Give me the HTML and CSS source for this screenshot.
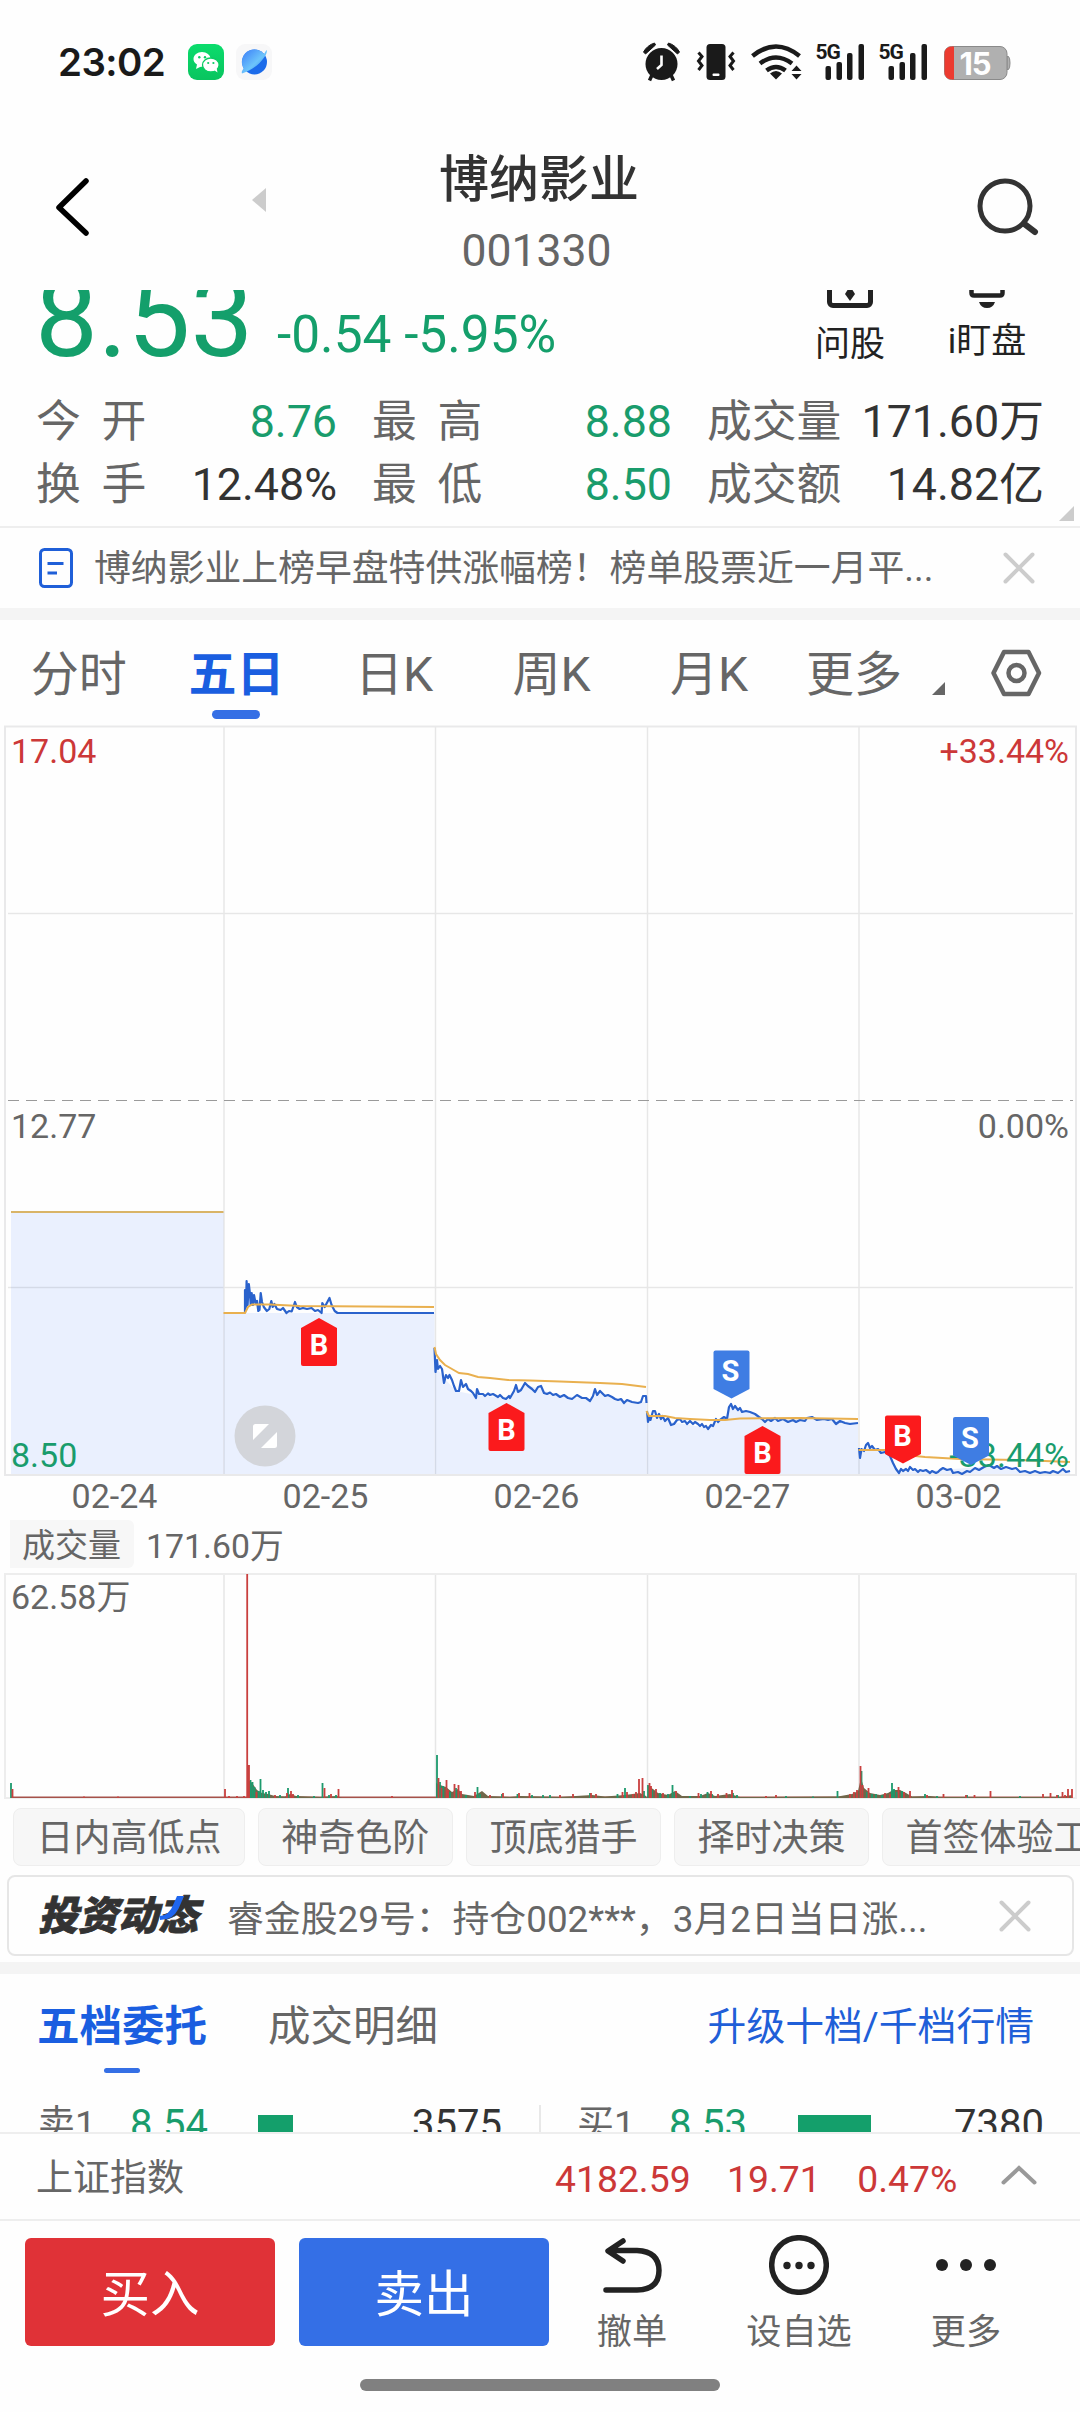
FILE: index.html
```html
<!DOCTYPE html>
<html lang="zh-CN">
<head>
<meta charset="utf-8">
<title>博纳影业 001330</title>
<link rel="stylesheet" href="styles.css">
</head>
<body>
<div class="status">
  <span class="clock">23:02</span>
  <svg class="app-icon" width="36" height="36" viewBox="0 0 36 36">
    <defs><linearGradient id="wx" x1="0" y1="0" x2="0" y2="1"><stop offset="0" stop-color="#0bdc6c"/><stop offset="1" stop-color="#09c45f"/></linearGradient></defs>
    <rect width="36" height="36" rx="9" fill="url(#wx)"/>
    <path d="M8 25l1-4.500C6.500 19 5.500 17 5.500 15c0-4 4-7 8.500-7s8.500 3 8.500 6.500L18 22l-6 1z" fill="#fff"/>
    <ellipse cx="22.800" cy="21" rx="8.300" ry="7" fill="#fff" stroke="#0acc63" stroke-width="1.300"/>
    <path d="M26 26l3.500 2.500-.8-4z" fill="#fff"/>
    <g fill="#0acc63"><circle cx="11.300" cy="13.300" r="1.200"/><circle cx="17" cy="13.300" r="1.200"/><circle cx="20.200" cy="19" r="1.100"/><circle cx="25.400" cy="19" r="1.100"/></g>
  </svg>
  <svg class="app-icon" width="36" height="36" viewBox="0 0 36 36">
    <defs><linearGradient id="pl" x1="0" y1="0" x2="1" y2="1"><stop offset="0" stop-color="#3a7cf8"/><stop offset=".55" stop-color="#6cc4fb"/><stop offset="1" stop-color="#2a7ff0"/></linearGradient></defs>
    <rect width="36" height="36" rx="9" fill="#f7f7f8"/>
    <circle cx="18.500" cy="18" r="12.500" fill="#1b6bea"/>
    <path d="M6 20A12.500 12.500 0 0 1 28 10l2.500-4C33 9 22 25 6 29.500c-1-2 1-4 1.500-5z" fill="url(#pl)"/>
  </svg>
  <svg class="sys" width="390" height="44" viewBox="630 40 390 44">
    <g fill="#1a1a1a">
      <circle cx="661.500" cy="64" r="16"/>
      <path d="M643.500 52a19 19 0 0 1 11-9l1 2-10 9zM679.500 52a19 19 0 0 0-11-9l-1 2 10 9z" stroke="#1a1a1a" stroke-width="1"/>
      <path d="M652 75l-2.500 5.500M671 75l2.500 5.500" stroke="#1a1a1a" stroke-width="3.500"/>
      <path d="M661.500 55.500V65l-4.500 4" fill="none" stroke="#fff" stroke-width="2.600"/>
      <rect x="706.500" y="44" width="19" height="36" rx="3.500"/><rect x="712.500" y="73.500" width="7" height="2.500" rx="1" fill="#fff"/>
      <g fill="none" stroke="#1a1a1a" stroke-width="3"><path d="M698.500 52.500l3.500 4-3.500 4.500 3.500 4.500-3.500 4.500M733.500 52.500l-3.500 4 3.500 4.500-3.500 4.500 3.500 4.500"/></g>
      <g fill="none" stroke="#1a1a1a" stroke-width="4.500"><path d="M752.500 56q23.500-19 47 0M760 63.500q16-12 32 0M766.500 70.500q9.500-7 19 0"/></g>
      <path d="M770 73.500q6-5 12 0l-6 6z"/>
      <path d="M791.500 71l5-5.500 5 5.500zM791.500 74l5 5.500 5-5.500z"/>
      <g id="sig"><text class="s5g" x="815.500" y="58.500">5G</text><rect x="825.500" y="66" width="5.500" height="14" rx="2"/><rect x="836.500" y="62" width="5.500" height="18" rx="2"/><rect x="847" y="53" width="5.500" height="27" rx="2"/><rect x="858.500" y="44" width="5.500" height="36" rx="2"/></g>
      <use href="#sig" x="63"/>
    </g>
    <path d="M1007 56.500h1.500q1.500 1.500 1.500 6.500t-1.500 6.500h-1.500z" fill="#b0b0b0" stroke="#8a8a8a"/>
    <rect x="944.500" y="46.500" width="62.500" height="33" rx="7" fill="#b0b0b0" stroke="#8a8a8a"/>
    <path d="M954 46.500h-2.500a7 7 0 0 0-7 7v19a7 7 0 0 0 7 7h2.500z" fill="#ec3b30"/>
    <text class="batt" x="975" y="74.500">15</text>
  </svg>
</div>

<header class="topbar">
  <svg class="back" width="40" height="60" viewBox="0 0 40 60"><path d="M32 4L5 30.500 32 56" fill="none" stroke="#000" stroke-width="5.500" stroke-linecap="round" stroke-linejoin="round"/></svg>
  <svg class="prev" width="14" height="24" viewBox="0 0 14 24"><path d="M14 0v24L0 12z" fill="#ccc"/></svg>
  <div class="heading"><h1>博纳影业</h1><p>001330</p></div>
  <svg class="search" width="66" height="60" viewBox="975 177 66 60"><circle cx="1005" cy="206" r="25" fill="none" stroke="#333" stroke-width="5"/><path d="M1024.500 224l10.500 8" stroke="#333" stroke-width="6" stroke-linecap="round"/></svg>
</header>

<section class="quote">
  <div class="price-row">
    <span class="price">8.53</span>
    <span class="change">-0.54 -5.95%</span>
    <div class="shortcut ask">
      <svg width="50" height="30" viewBox="825 278 50 30"><path d="M829.500 280v22a3.500 3.500 0 0 0 3.500 3.500h34a3.500 3.500 0 0 0 3.500-3.500v-22" fill="none" stroke="#222" stroke-width="5"/><path d="M850 286l5 8-5 7-5-7z" fill="#222"/></svg>
      <span>问股</span>
    </div>
    <div class="shortcut watch">
      <svg width="50" height="30" viewBox="962 278 50 30"><path d="M971.500 280v13q0 2.500 2.500 2.500h26q2.500 0 2.500-2.500v-13" fill="none" stroke="#222" stroke-width="4.500"/><path d="M979 302h16q-2 6-8 6t-8-6z" fill="#222"/></svg>
      <span>i盯盘</span>
    </div>
  </div>
  <dl class="stats">
    <div><dt>今 开</dt><dd class="down">8.76</dd></div>
    <div><dt>最 高</dt><dd class="down">8.88</dd></div>
    <div><dt>成交量</dt><dd>171.60万</dd></div>
    <div><dt>换 手</dt><dd>12.48%</dd></div>
    <div><dt>最 低</dt><dd class="down">8.50</dd></div>
    <div><dt>成交额</dt><dd>14.82亿</dd></div>
  </dl>
  <svg class="corner" width="15" height="15" viewBox="0 0 15 15"><path d="M15 0v15H0z" fill="#ccc"/></svg>
</section>

<section class="news">
  <svg width="34" height="40" viewBox="0 0 34 40"><rect x="1.500" y="1.500" width="31" height="37" rx="4" fill="none" stroke="#1f5fd8" stroke-width="3"/><path d="M8.500 15.500h16M8.500 25h9.500" stroke="#1f5fd8" stroke-width="3"/></svg>
  <p>博纳影业上榜早盘特供涨幅榜！榜单股票近一月平...</p>
  <svg class="close" width="32" height="32" viewBox="0 0 32 32"><path d="M2.500 2.500l27 27M29.500 2.500l-27 27" stroke="#ccc" stroke-width="4" stroke-linecap="round"/></svg>
</section>

<nav class="periods">
  <span>分时</span><span class="on">五日</span><span>日K</span><span>周K</span><span>月K</span>
  <div class="more">更多</div>
  <svg class="tri" width="13" height="13" viewBox="0 0 13 13"><path d="M13 0v13H0z" fill="#666"/></svg>
  <svg class="gear" width="52" height="48" viewBox="990 649 52 48"><path d="M1004 652h24.500l10.500 21-10.500 21H1004l-10.500-21z" fill="none" stroke="#666" stroke-width="4.500" stroke-linejoin="round"/><circle cx="1016.500" cy="673" r="8" fill="none" stroke="#666" stroke-width="4.500"/></svg>
</nav>

<svg class="chart" width="1080" height="752" viewBox="0 725 1080 752">
  <g fill="#eaf0fe">
    <path d="M11 1212H223.500V1475H11z"/>
    <path d="M223.500 1313H434.500V1475H223.500z"/>
    <path d="M434.500 1365L444 1378 456 1391 476 1395 506 1398 514 1392 525 1385 538 1388 550 1393 590 1400 600 1392 624 1402 646.500 1402V1475H434.500z"/>
    <path d="M646.500 1415L671 1422 708 1428 724 1419 731 1405 745 1411 765 1420 830 1419 858 1423V1475H646.500z"/>
    <path d="M858 1452L869 1447 890 1456 899 1472 942 1470 989 1466 1020 1471 1070 1471V1475H858z"/>
  </g>
  <g fill="none" stroke="#e9e9ea" stroke-width="2">
    <path d="M224 727V1475M435.500 727V1475M647.500 727V1475M859 727V1475M8 913.500H1073M8 1287.500H1073" stroke="#000" stroke-opacity=".09" stroke-width="1.500"/>
    <rect x="5" y="726.500" width="1071" height="748.500"/>
  </g>
  <path d="M8 1100.500H1073" stroke="#9a9a9a" stroke-width="1" stroke-dasharray="11 7"/>
  <g fill="none" stroke="#2a62cc" stroke-width="2.200" stroke-linejoin="round">
    <path d="M245 1313V1290L246 1307 246.600 1281 247.600 1305 248.800 1284 250 1294 250.700 1305 251.700 1293 252.800 1305 254 1295 255.500 1303 257 1301 258.300 1311 259.500 1310 260.700 1293 262 1302 263.800 1307 266.900 1311 269.300 1309 271.300 1301 272.700 1307 274.400 1304 277 1309 280.600 1310 283 1308 286.500 1313 289 1311 291.700 1311.500 295 1302 296.800 1307 299.600 1309 303 1308 307 1309 311.600 1308 315 1311 318 1310 321.600 1313 322.300 1303 324.700 1307 329.500 1298 331.600 1305 334.700 1311 337.500 1313H434"/>
    <path d="M434.500 1348L435.500 1372 437 1360 438 1369 440 1366 442 1369 444 1383 446 1375 448 1378 449.500 1375 452 1380 454 1386 456 1391 459 1391 461 1380 463 1387 466 1384 468 1389 471 1391 473 1393 476 1398 477 1389 479 1394 483 1394 485 1396 488 1393.500 490 1395 493 1394 498 1397 500 1395 503 1398 506 1399 509 1396 510 1398 514 1391 516 1385 518 1392 521 1390 525 1383 528 1386 532 1389 535 1392 538 1387 541 1386 544 1393 547 1394 550 1392.500 553 1395 556 1394 560 1397 564 1395 568 1398 572 1399 577 1395 582 1398 586 1398 590 1401 593 1396 595 1389 597 1395 600 1391 605 1396 608 1395 612 1397 615 1399 618 1400 621 1399 624 1403 627 1400 632 1402 638 1403 641 1402 643 1396 646 1396 646.500 1403"/>
    <path d="M647 1411L648 1422 649.500 1416 650.500 1420 653 1411 655 1411 657 1418 659 1414 661 1419 662.500 1416 665 1421 668 1418 671 1425 674 1424 677 1420 680 1419 682 1422 685 1421 687 1424 690 1421 693 1424 695 1422 698 1424 700 1426 702 1424 704 1427 706 1426 708 1429 711 1425 713 1426 716 1419 718 1422 720 1420 724 1417 727 1419 729 1407 731 1404 733 1409 735 1406 738 1410 740 1408 742 1412 746 1411 750 1412 755 1414 759 1417 762 1419 765 1422 768 1419 771 1421 775 1418 778 1421 783 1419 788 1422 793 1420 796 1422 800 1420 805 1421 807 1418 812 1417 817 1420 824 1419 828 1420 832 1419 836 1424 840 1421 845 1423 850 1424 858 1423"/>
    <path d="M859 1448L860 1458 861.500 1449 864 1451 866 1445 868 1443 870 1448 872 1446 875 1450 878 1449 881 1453 885 1452 890 1456 893 1463 896 1469 899 1473 901 1469 903 1471 906 1469 908 1471 910 1467 913 1470 915 1469 918 1472 920 1470 923 1471 926 1470 930 1473 932 1471 936 1473 938 1472 940 1470 943 1468 947 1470 951 1469 953 1473 958 1472 962 1474 967 1471 970 1472 975 1468 979 1470 984 1467 989 1465 994 1468 997 1466 1001 1469 1006 1467 1012 1469 1016 1468 1020 1472 1025 1471 1030 1473 1035 1471 1040 1473 1045 1472 1050 1473 1053 1471 1058 1473 1063 1469 1066 1472 1070 1471"/>
  </g>
  <g fill="none" stroke="#e9b04f" stroke-width="2">
    <path d="M11 1212H223.500" stroke="#d9b467"/>
    <path d="M223.500 1313H245L248 1307 252 1304.500 270 1304.500 300 1306 434 1307"/>
    <path d="M434.500 1347L436 1354 440 1360 445 1365 452 1369 459 1373 468 1374 478 1377 490 1378 508 1380 530 1380.500 560 1381.500 600 1383 622 1384 646 1387"/>
    <path d="M646.500 1411L649 1416 665 1416 675 1418 690 1419 710 1420 725 1420 740 1418.500 800 1418 858 1419"/>
    <path d="M858.500 1450H885L905 1455 925 1457 960 1459 1020 1460 1070 1462"/>
  </g>
  <g class="axis">
    <text x="11" y="763" class="up">17.04</text><text x="1069" y="763" class="up end">+33.44%</text>
    <text x="11" y="1138">12.77</text><text x="1069" y="1138" class="end">0.00%</text>
    <text x="11" y="1467" class="down">8.50</text><text x="1069" y="1467" class="down end">-33.44%</text>
  </g>
  <circle cx="265" cy="1436" r="30.500" fill="#d3d5da"/>
  <path d="M253 1426.500q0-2.500 2.500-2.500H269L253 1440zM277 1432v13.500q0 2.500-2.500 2.500H261z" fill="#fff"/>
  <g class="marks">
    <g fill="#fb1a1c">
      <path d="M319 1318l18 10v36q0 2-2 2h-32q-2 0-2-2v-36z"/><path d="M506.500 1403l18 10v36q0 2-2 2h-32q-2 0-2-2v-36z"/><path d="M762.500 1426l18 10v36q0 2-2 2h-32q-2 0-2-2v-36z"/>
      <path d="M903 1463.500l18-9.500v-36.500q0-2-2-2h-32q-2 0-2 2v36.500z"/>
    </g>
    <g fill="#3f7de3"><path d="M731.500 1398.500l18-9.500v-36.500q0-2-2-2h-32q-2 0-2 2v36.500z"/><path d="M971 1465l18-9.500v-36.500q0-2-2-2h-32q-2 0-2 2v36.500z"/></g>
    <text x="319" y="1355">B</text><text x="506.500" y="1440">B</text><text x="762.500" y="1463">B</text><text x="902.500" y="1446">B</text><text x="730.500" y="1381">S</text><text x="970" y="1447.500">S</text>
  </g>
</svg>
<div class="dates"><span>02-24</span><span>02-25</span><span>02-26</span><span>02-27</span><span>03-02</span></div>

<div class="vol-head"><span class="tag">成交量</span><span>171.60万</span></div>
<svg class="chart" width="1080" height="227" viewBox="0 1573 1080 227">
  <g fill="none" stroke="#ededed" stroke-width="2">
    <path d="M224 1574V1798M435.500 1574V1798M647.500 1574V1798M859 1574V1798" stroke="#e6e6e6" stroke-width="1.500"/>
    <rect x="5" y="1574" width="1071" height="224"/>
  </g>
  <text class="axis" x="11" y="1608.500">62.58万</text>
  <path d="M11 1797.200H1072" stroke="#a5524a" stroke-width="1.600"/>
  <g fill="#70674a">
    <path d="M248 1798V1780L252 1783 257 1790 262 1793 268 1794 275 1796 285 1796.500 290 1794 296 1796 320 1797 337 1796 342 1798z"/>
    <path d="M436 1798V1783L440 1785 446 1787 452 1792 458 1789 462 1794 474 1796 482 1791 488 1796 500 1796.500 510 1797 520 1796 560 1797 592 1795 605 1796.500 625 1795 640 1793 646 1796V1798z"/>
    <path d="M648 1798V1786L653 1789 658 1793 668 1795 675 1791 682 1796 700 1796 708 1793 715 1796 730 1794 740 1797 838 1796.500 852 1794 858 1791 861 1778 864 1788 870 1793 880 1795 888 1793 893 1790 900 1790 906 1793 912 1796.500 930 1796 940 1797 1060 1797 1072 1795V1798z"/>
  </g>
  <path fill="none" stroke="#1c9a6d" stroke-width="1.800" d="M11 1798v-15M250.500 1798v-18M252.500 1798v-16M254.500 1798v-11M258.500 1798v-7M260.500 1798v-19M263 1798v-8M266 1798v-6M269 1798v-7M280 1798v-3M288 1798v-10M298 1798v-3M314 1798v-2M322.500 1798v-15M329 1798v-3M336 1798v-3M437 1798v-43M440 1798v-16M443 1798v-12M450 1798v-6M456 1798v-10M460 1798v-4M466 1798v-3M477.500 1798v-11M480 1798v-4M502 1798v-4M517.500 1798v-4M532 1798v-3M543 1798v-3M550 1798v-3M590 1798v-5M617.500 1798v-4M625 1798v-10M644 1798v-7M648 1798v-13M652 1798v-8M660 1798v-5M668 1798v-4M672.500 1798v-13M675 1798v-6M690 1798v-2M701 1798v-4M707.500 1798v-6M712 1798v-4M733 1798v-5M737 1798v-3M786 1798v-2M813 1798v-1.500M837.500 1798v-7M861.500 1798v-27M867 1798v-6M872 1798v-4M876 1798v-4M882 1798v-3M892 1798v-15M894 1798v-9M897 1798v-6M902 1798v-7M925 1798v-4M937 1798v-2M967 1798v-3M1020 1798v-2M1058 1798v-3"/>
  <path fill="none" stroke="#c9403f" stroke-width="1.800" d="M12.500 1798v-9M84 1798v-1.500M118 1798v-1.500M225 1798v-9M229 1798v-2M237 1798v-2M244 1798v-2M247.200 1798v-224M249 1798v-33M256.500 1798v-6M275 1798v-3M287 1798v-5M291 1798v-7M293 1798v-4M324.500 1798v-10M331 1798v-4M338.500 1798v-9M392 1798v-2M438.500 1798v-20M441.500 1798v-10M446.500 1798v-18M448 1798v-8M454.500 1798v-14M458.500 1798v-13M461 1798v-7M475 1798v-6M490 1798v-3M503 1798v-5M519 1798v-5M529.500 1798v-5M560 1798v-3M573 1798v-4M591 1798v-5M596 1798v-4M622.500 1798v-6M627 1798v-6M633 1798v-4M636 1798v-6M639 1798v-19M642.500 1798v-20M649.500 1798v-15M651 1798v-12M656 1798v-9M663 1798v-5M676 1798v-7M698.500 1798v-5M711 1798v-7M718 1798v-4M726.500 1798v-5M732 1798v-8M766 1798v-2M776 1798v-3M850 1798v-4M854 1798v-6M857 1798v-8M860.500 1798v-32M862.500 1798v-13M868.500 1798v-10M885 1798v-5M890 1798v-4M898.500 1798v-11M904 1798v-6M910 1798v-7M927 1798v-3M943.500 1798v-4M966 1798v-3M974.500 1798v-3M990.500 1798v-7M1043 1798v-4M1050.500 1798v-5M1057 1798v-3M1062.500 1798v-6M1065 1798v-3M1068 1798v-9M1072 1798v-9"/>
</svg>

<div class="chips"><span>日内高低点</span><span>神奇色阶</span><span>顶底猎手</span><span>择时决策</span><span>首签体验工具</span></div>

<div class="feed">
  <strong>投资动<span class="tai">态<svg width="28" height="24" viewBox="0 0 28 24"><path d="M0 20q9 0 14-13l3-7h7l-3 7Q16 21 7 23L0 24z" fill="#1f66ee"/></svg></span></strong>
  <p>睿金股29号：持仓002***，3月2日当日涨...</p>
  <svg class="close" width="32" height="32" viewBox="0 0 32 32"><path d="M2.500 2.500l27 27M29.500 2.500l-27 27" stroke="#ccc" stroke-width="4" stroke-linecap="round"/></svg>
</div>

<section class="book">
  <div class="book-tabs"><span class="on">五档委托</span><span>成交明细</span><a>升级十档/千档行情</a></div>
  <div class="levels">
    <div class="level"><span class="side">卖1</span><span class="px">8.54</span><i style="width:35px"></i><b>3575</b></div>
    <div class="level buy"><span class="side">买1</span><span class="px">8.53</span><i style="width:73px"></i><b>7380</b></div>
  </div>
</section>

<div class="index"><span class="name">上证指数</span><span>4182.59</span><span>19.71</span><span>0.47%</span>
  <svg width="36" height="20" viewBox="0 0 36 20"><path d="M2.500 17.500L18 3l15.500 14.500" fill="none" stroke="#999" stroke-width="4" stroke-linecap="round"/></svg>
</div>

<footer class="actions">
  <button class="buy">买入</button><button class="sell">卖出</button>
  <div class="act cancel"><svg width="60" height="60" viewBox="603 2235 60 60"><path d="M624 2241l-15 10 15 10M610 2250.500h28q22 1 22 20t-22 19.500h-31" fill="none" stroke="#222" stroke-width="5.500" stroke-linecap="round" stroke-linejoin="round"/></svg><span>撤单</span></div>
  <div class="act fav"><svg width="60" height="60" viewBox="0 0 60 60"><circle cx="30" cy="30" r="27.300" fill="none" stroke="#222" stroke-width="5.500"/><g fill="#222"><circle cx="18" cy="30.500" r="3.700"/><circle cx="30" cy="30.500" r="3.700"/><circle cx="42" cy="30.500" r="3.700"/></g></svg><span>设自选</span></div>
  <div class="act"><svg width="60" height="60" viewBox="0 0 60 60"><g fill="#222"><circle cx="6" cy="30" r="6"/><circle cx="30" cy="30" r="6"/><circle cx="54" cy="30" r="6"/></g></svg><span>更多</span></div>
</footer>
<div class="home"></div>
</body>
</html>
```
FILE: styles.css
```css
* { box-sizing: border-box; margin: 0; padding: 0; }
body { width: 1080px; height: 2412px; overflow: hidden; background: #fefefe; color: #666; font-family: Roboto, "Noto Sans CJK SC", sans-serif; font-size: 37px; display: flex; flex-direction: column; }
body > * { flex: none; }
svg { display: block; flex: none; }
p, span { white-space: nowrap; }
.up { color: #cc3838; fill: #cc3838; }
.down, .stats .down { color: #199c6c; fill: #199c6c; }

.status { height: 124px; display: flex; align-items: center; padding-left: 58px; }
.clock { font: 600 38.500px/40px Inter, sans-serif; letter-spacing: -.6px; color: #1a1a1a; width: 130px; }
.app-icon { margin-right: 12px; }
.sys { margin-left: 346px; }
.s5g { font: 700 21px Roboto, sans-serif; letter-spacing: -1px; }
.batt { font: 700 31px Inter, sans-serif; fill: #fff; text-anchor: middle; letter-spacing: -1px; }

.topbar { height: 166px; display: flex; align-items: center; }
.back { margin-left: 54px; }
.prev { margin: -14px 0 0 158px; }
.heading { width: 260px; height: 114px; margin: 26px 0 0 143px; align-self: flex-start; text-align: center; }
.heading h1 { font-weight: 500; font-size: 50px; line-height: 60px; color: #333; margin-bottom: 16px; }
.heading p { font-size: 44.500px; line-height: 50px; margin-left: -5px; }
.search { margin-left: 306px; }

.quote { height: 238px; overflow: hidden; border-bottom: 2px solid #eee; position: relative; }
.price-row { display: flex; height: 112px; margin-top: -12px; padding-left: 35px; color: #149f6b; align-items: flex-start; }
.price { font-size: 112px; line-height: 80px; width: 242px; }
.change { font-size: 51.400px; line-height: 57px; margin-top: 28px; width: 503px; }
.shortcut { width: 140px; display: flex; flex-direction: column; align-items: center; color: #222; font-size: 35px; line-height: 40px; }
.shortcut span { margin-top: 17px; }
.watch { width: 134px; }
.watch span { margin-top: 14px; }
.stats { display: grid; grid-template-columns: 301px 300px 337px; column-gap: 35px; padding-left: 36px; font-size: 44.800px; line-height: 63px; }
.stats div { display: flex; justify-content: space-between; }
.stats dt { word-spacing: 9.500px; white-space: nowrap; }
.stats dd { color: #333; white-space: nowrap; }
.corner { position: absolute; right: 6px; bottom: 5px; }

.news { height: 92px; padding: 0 45px 0 39px; border-bottom: 12px solid #f4f4f4; display: flex; align-items: center; }
.news p { margin-left: 21px; flex: 1; line-height: 50px; font-size: 36.850px; padding-top: 2px; }

.periods { height: 105px; display: flex; font-size: 48px; line-height: 60px; padding-top: 25px; }
.periods span { width: 157.600px; text-align: center; height: 80px; }
.periods .on { color: #1a5ee0; font-weight: 700; }
.periods .on::after, .book-tabs .on::after { content: ""; display: block; width: 48px; height: 9px; border-radius: 4.500px; background: #356fe5; margin: 5px auto 0; }
.more { margin-left: 18px; width: 97px; }
.tri { margin: 37px 0 0 29px; }
.gear { margin: 4px 0 0 45px; }

.axis { font-size: 34px; fill: #666; }
.axis .up { fill: #cc3838; }
.axis .down { fill: #199c6c; }
.end { text-anchor: end; }
.marks text { fill: #fff; font: 700 29px Roboto, sans-serif; text-anchor: middle; }
.dates { display: flex; padding-left: 9px; font-size: 34px; line-height: 38px; height: 43px; }
.dates span { width: 211px; text-align: center; }
.vol-head { height: 53px; display: flex; padding-left: 10px; font-size: 33.800px; line-height: 48px; align-items: flex-start; }
.tag { background: #f7f7f7; border-radius: 0 6px 6px 0; width: 124px; height: 48px; padding-left: 12px; font-size: 33px; line-height: 52px; margin-right: 12px; }
.vol-head span:last-child { line-height: 53px; }

.chips { display: flex; gap: 12.500px; padding-left: 13px; margin-top: 8px; height: 58px; overflow: hidden; }
.chips span { flex: none; border: 1.500px solid #eee; border-radius: 8px; background: #f7f7f7; padding: 0 22.500px; font-size: 37px; line-height: 60px; }
.chips span + span { padding: 0 22.800px; }
.feed { margin: 9px 6px 6px 7px; height: 81px; border: 2px solid #e6e6e6; border-radius: 8px; display: flex; align-items: center; padding: 0 41px 0 29px; }
.feed strong { font-weight: 900; font-style: italic; font-size: 40px; line-height: 50px; color: #333; width: 189px; padding-top: 3px; -webkit-text-stroke: .8px #333; }
.tai { position: relative; display: inline-block; }
.tai svg { position: absolute; left: 2px; top: 4px; }
.feed p { flex: 1; font-size: 36.850px; }

.book { border-top: 12px solid #f4f4f4; height: 170px; overflow: hidden; }
.book-tabs { display: flex; padding: 26px 46px 0 37px; font-size: 42.500px; line-height: 54px; height: 131px; }
.book-tabs .on { color: #1a5ee0; font-weight: 700; margin-right: 61px; }
.book-tabs .on::after { width: 36px; height: 5px; margin-top: 14px; }
.book-tabs a { margin-left: auto; color: #1f5fd8; font-size: 38.800px; }
.levels { display: flex; font-size: 40px; line-height: 40px; }
.level { width: 541px; height: 60px; padding: 0 37px 0 38px; display: flex; border-right: 2px solid #e8e8e8; }
.level.buy { border: 0; width: 539px; padding: 0 36px; }
.side { width: 92px; font-size: 37px; }
.px { width: 128px; color: #199c6c; }
.level i { background: #149f6b; margin-top: 10px; height: 34px; }
.level.buy .px { width: 129px; }
.level b { font-weight: 400; color: #333; margin-left: auto; }

.index { border-top: 2px solid #eee; border-bottom: 2px solid #eee; height: 89px; display: flex; align-items: center; padding: 4px 0 0 36px; font-size: 37.300px; line-height: 60px; color: #cc3838; }
.index .name { color: #666; font-size: 37px; width: 519px; }
.index span + span { margin-right: 36.500px; }
.index svg { margin-left: 7px; margin-top: -7px; }

.actions { display: flex; padding: 17px 0 0 25px; height: 158px; }
button { width: 250px; height: 108px; margin-right: 24px; border: 0; border-radius: 6px; color: #fff; font: 400 49.500px/114px Roboto, "Noto Sans CJK SC", sans-serif; }
button.buy { background: #e03237; }
button.sell { background: #346fe6; }
.act { width: 168px; margin-top: -3px; display: flex; flex-direction: column; align-items: center; font-size: 35.200px; line-height: 44px; }
.act span { margin-top: 15px; }
.cancel { width: 118px; }
.fav { width: 216px; }
.act:last-child { width: 118px; }
.home { width: 360px; height: 12px; border-radius: 6px; background: #808080; margin: 0 auto; }
```
